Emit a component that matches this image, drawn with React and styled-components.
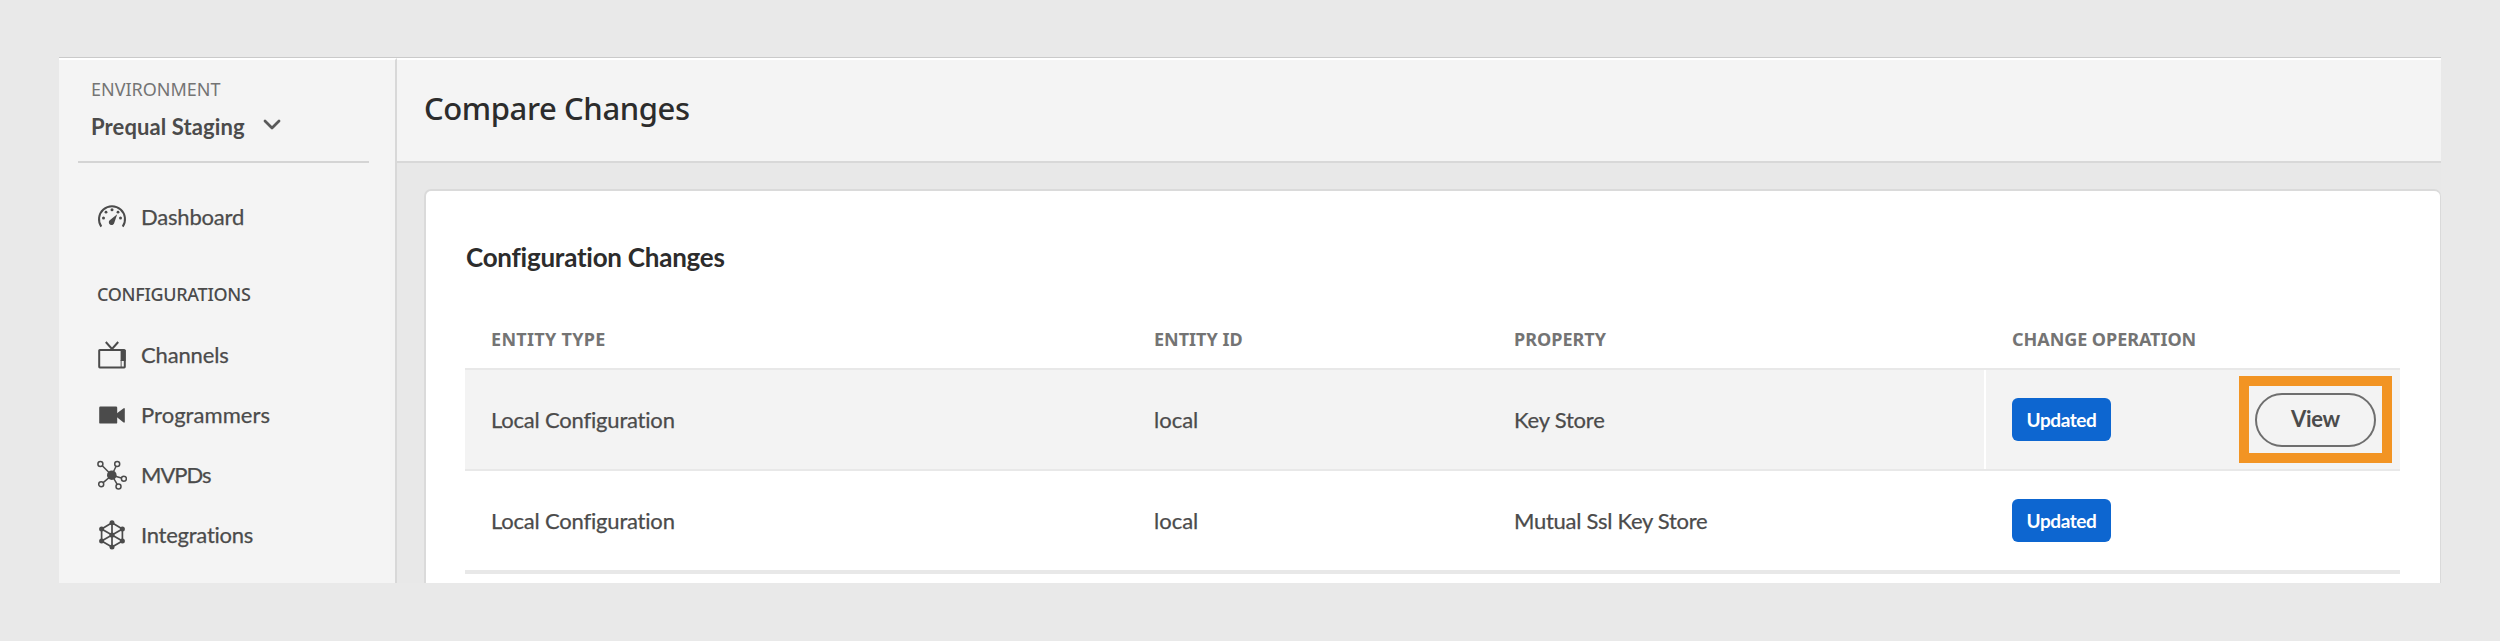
import React from "react";
import styled, { createGlobalStyle } from "styled-components";

const SANS = '"Noto Sans", sans-serif';
const HUMANIST = 'Lato, "Noto Sans", sans-serif';

const GlobalStyle = createGlobalStyle`
  * { box-sizing: border-box; }
  body {
    margin: 0;
    background: #e9e9e9;
    font-family: ${HUMANIST};
    font-variant-ligatures: none;
    color: #4b4b4b;
  }
`;

const Page = styled.div`
  width: 2500px;
  height: 641px;
  padding: 57px 59px 58px;
`;

const Window = styled.div`
  display: flex;
  height: 526px;
  border-top: 1px solid #cacaca;
  background: #e8e8e8;
  overflow: hidden;
`;

const Sidebar = styled.aside`
  width: 338px;
  flex: none;
  background: #f4f4f4;
  border-top: 2px solid #fff;
  border-right: 2px solid #d8d8d8;
`;

const Environment = styled.div`
  height: 103px;
  margin: 0 26px 0 19px;
  padding: 16px 0 0 13px;
  border-bottom: 2px solid #d4d4d4;
`;

const EnvironmentLabel = styled.div`
  font: 400 18px/26px ${SANS};
  letter-spacing: 0px;
  color: #747474;
`;

const EnvironmentPicker = styled.div`
  display: flex;
  align-items: center;
  height: 36px;
  margin-top: 6px;
  gap: 18px;
  font-size: 22px;
  font-weight: 700;
  letter-spacing: 0.1px;
`;

const Nav = styled.nav`
  display: flex;
  flex-direction: column;
  padding: 24px 0 0 38px;
`;

const NavItem = styled.a`
  display: flex;
  align-items: center;
  gap: 14px;
  height: 60px;
  font-size: 22px;
  letter-spacing: ${(p) => p.$tracking || 0}px;
`;

const NavLabel = styled.span`
  padding-bottom: 2px;
  -webkit-text-stroke: 0.25px currentColor;
`;

const NavHeading = styled.div`
  height: 78px;
  padding: 34px 0 0;
  font: 500 18px/26px ${SANS};
  letter-spacing: -0.3px;
`;

const Main = styled.main`
  flex: 1;
  display: flex;
  flex-direction: column;
  min-width: 0;
`;

const Header = styled.header`
  height: 105px;
  flex: none;
  padding: 0 27px 5px;
  display: flex;
  align-items: center;
  background: #f4f4f4;
  border-top: 2px solid #fff;
  border-bottom: 2px solid #d8d8d8;
`;

const Title = styled.h1`
  margin: 0;
  font: 500 31px/42px ${SANS};
  letter-spacing: -0.4px;
  color: #2c2c2c;
`;

const Card = styled.section`
  flex: 1;
  margin: 26px 0 0 27px;
  padding: 46px 40px 0 39px;
  background: #fff;
  border: 2px solid #dadada;
  border-right-width: 1px;
  border-bottom: 0;
  border-radius: 7px 7px 0 0;
`;

const CardTitle = styled.h2`
  margin: 0;
  padding-left: 1px;
  font-size: 26px;
  line-height: 40px;
  font-weight: 700;
  letter-spacing: -0.25px;
  color: #2c2c2c;
`;

const Row = styled.div`
  display: grid;
  grid-template-columns: 663px 360px 496px 416px;
  height: ${(p) => p.$height}px;
  background: ${(p) => (p.$active ? "#f3f3f3" : "#fff")};
  border-bottom: ${(p) => p.$border || 2}px solid #e8e8e8;
`;

const HeadRow = styled(Row)`
  padding-top: 32px;
`;

const HeadCell = styled.div`
  display: flex;
  align-items: center;
  padding-left: ${(p) => p.$indent || 26}px;
  font: 700 18px/26px ${SANS};
  letter-spacing: ${(p) => p.$tracking || 0}px;
  color: #747474;
`;

const Cell = styled.div`
  display: flex;
  align-items: center;
  padding-left: 26px;
  font-size: 22px;
  letter-spacing: ${(p) => p.$tracking || 0}px;
  -webkit-text-stroke: 0.25px currentColor;
`;

const OperationCell = styled(Cell)`
  justify-content: space-between;
  padding: 0 8px 0 26px;
  border-left: 2px solid #fff;
  -webkit-text-stroke: 0;
`;

const Badge = styled.span`
  display: flex;
  align-items: center;
  justify-content: center;
  width: 99px;
  height: 43px;
  border-radius: 6px;
  background: #0d66d0;
  color: #fff;
  font-size: 19px;
  font-weight: 700;
  letter-spacing: -0.4px;
`;

const Highlight = styled.div`
  display: flex;
  align-items: center;
  justify-content: center;
  width: 153px;
  height: 87px;
  border: 10px solid #f29423;
`;

const ViewButton = styled.button`
  width: 121px;
  height: 54px;
  padding: 0 0 2px;
  border: 2px solid #6e6e6e;
  border-radius: 27px;
  background: transparent;
  color: #4b4b4b;
  font: 700 22px/28px ${HUMANIST};
  letter-spacing: -0.3px;
`;

const Glyph = styled.svg.attrs({ viewBox: "0 0 30 30", width: 30, height: 30 })`
  flex: none;
  fill: none;
  stroke: #4b4b4b;
  stroke-width: 2;

  .solid { fill: #4b4b4b; stroke: none; }
  .thin { stroke-width: 1.5; }
`;

const ChevronIcon = styled.svg.attrs({ viewBox: "0 0 18 12", width: 18, height: 12 })`
  margin-bottom: 2px;
  fill: none;
  stroke: #5a5a5a;
  stroke-width: 2.8;
  stroke-linecap: round;
  stroke-linejoin: round;
`;

const GaugeIcon = () => (
  <Glyph>
    <path d="M4.3 24.6A13 13 0 1 1 25.7 24.6" />
    <g className="solid">
      <circle cx="15" cy="7.8" r="1.5" />
      <circle cx="9" cy="10.2" r="1.4" />
      <circle cx="21" cy="10.2" r="1.4" />
      <circle cx="6.5" cy="16" r="1.5" />
      <circle cx="23.5" cy="16" r="1.5" />
      <path d="M20.2 12.2L17.4 20.6A2.8 2.8 0 1 1 12.7 18.2Z" />
    </g>
  </Glyph>
);

const TvIcon = () => (
  <Glyph>
    <rect x="2.2" y="10" width="25.6" height="17.4" rx="0.6" />
    <path d="M8.8 2L15 9l6.2-7" />
    <path className="solid" d="M23.6 10h5v11h-5z" />
    <path className="thin" d="M24.2 20v7" opacity="0.6" />
  </Glyph>
);

const CameraIcon = () => (
  <Glyph>
    <g className="solid">
      <rect x="2.2" y="6.6" width="18" height="17" rx="1.2" />
      <path d="M20 13.3L26.6 8.3H27.8V22.4H26.6L20 17.2Z" />
    </g>
  </Glyph>
);

const HUB_NODES = [[3.4, 4], [20.2, 3.9], [26.9, 18.7], [21.5, 26.6], [4.2, 24.3]];

const HubIcon = () => (
  <Glyph>
    {HUB_NODES.map(([x, y]) => {
      const k = 1 - 2.6 / Math.hypot(x - 14.8, y - 15.2);
      return (
        <g key={x} className="thin">
          <path d={`M14.8 15.2L${14.8 + (x - 14.8) * k} ${15.2 + (y - 15.2) * k}`} />
          <circle cx={x} cy={y} r="2.5" />
        </g>
      );
    })}
    <circle className="solid" cx="14.8" cy="15.2" r="4.8" />
  </Glyph>
);

const HEX_POINTS = [[15, 2.8], [25.4, 9], [25.4, 21], [15, 27], [4.6, 21], [4.6, 9]];

const HexIcon = () => (
  <Glyph>
    <path d={`M${HEX_POINTS.map((p) => p.join(" ")).join("L")}Z`} strokeWidth="1.7" />
    {HEX_POINTS.map(([x, y]) => (
      <g key={`${x}-${y}`}>
        <path d={`M15 15L${x} ${y}`} strokeWidth="1.7" />
        <circle className="solid" cx={x} cy={y} r="2.5" />
      </g>
    ))}
    <circle className="solid" cx="15" cy="15" r="2.6" />
  </Glyph>
);

const CONFIG_LINKS = [
  { label: "Channels", Icon: TvIcon, tracking: -0.15 },
  { label: "Programmers", Icon: CameraIcon, tracking: 0.05 },
  { label: "MVPDs", Icon: HubIcon, tracking: -1 },
  { label: "Integrations", Icon: HexIcon, tracking: -0.25 },
];

export default function App() {
  return (
    <Page>
      <GlobalStyle />
      <Window>
        <Sidebar>
          <Environment>
            <EnvironmentLabel>ENVIRONMENT</EnvironmentLabel>
            <EnvironmentPicker>
              Prequal Staging
              <ChevronIcon>
                <path d="M2 2l7 7 7-7" />
              </ChevronIcon>
            </EnvironmentPicker>
          </Environment>
          <Nav>
            <NavItem $tracking={-0.2}>
              <GaugeIcon />
              <NavLabel>Dashboard</NavLabel>
            </NavItem>
            <NavHeading>CONFIGURATIONS</NavHeading>
            {CONFIG_LINKS.map(({ label, Icon, tracking }) => (
              <NavItem key={label} $tracking={tracking}>
                <Icon />
                <NavLabel>{label}</NavLabel>
              </NavItem>
            ))}
          </Nav>
        </Sidebar>
        <Main>
          <Header>
            <Title>Compare Changes</Title>
          </Header>
          <Card>
            <CardTitle>Configuration Changes</CardTitle>
            <HeadRow $height={93}>
              <HeadCell $tracking={0.3}>ENTITY TYPE</HeadCell>
              <HeadCell>ENTITY ID</HeadCell>
              <HeadCell>PROPERTY</HeadCell>
              <HeadCell $indent={28} $tracking={-0.05}>CHANGE OPERATION</HeadCell>
            </HeadRow>
            <Row $height={101} $active>
              <Cell $tracking={-0.2}>Local Configuration</Cell>
              <Cell>local</Cell>
              <Cell $tracking={-0.2}>Key Store</Cell>
              <OperationCell>
                <Badge>Updated</Badge>
                <Highlight>
                  <ViewButton>View</ViewButton>
                </Highlight>
              </OperationCell>
            </Row>
            <Row $height={103} $border={4}>
              <Cell $tracking={-0.2}>Local Configuration</Cell>
              <Cell>local</Cell>
              <Cell $tracking={-0.27}>Mutual Ssl Key Store</Cell>
              <OperationCell>
                <Badge>Updated</Badge>
              </OperationCell>
            </Row>
          </Card>
        </Main>
      </Window>
    </Page>
  );
}
